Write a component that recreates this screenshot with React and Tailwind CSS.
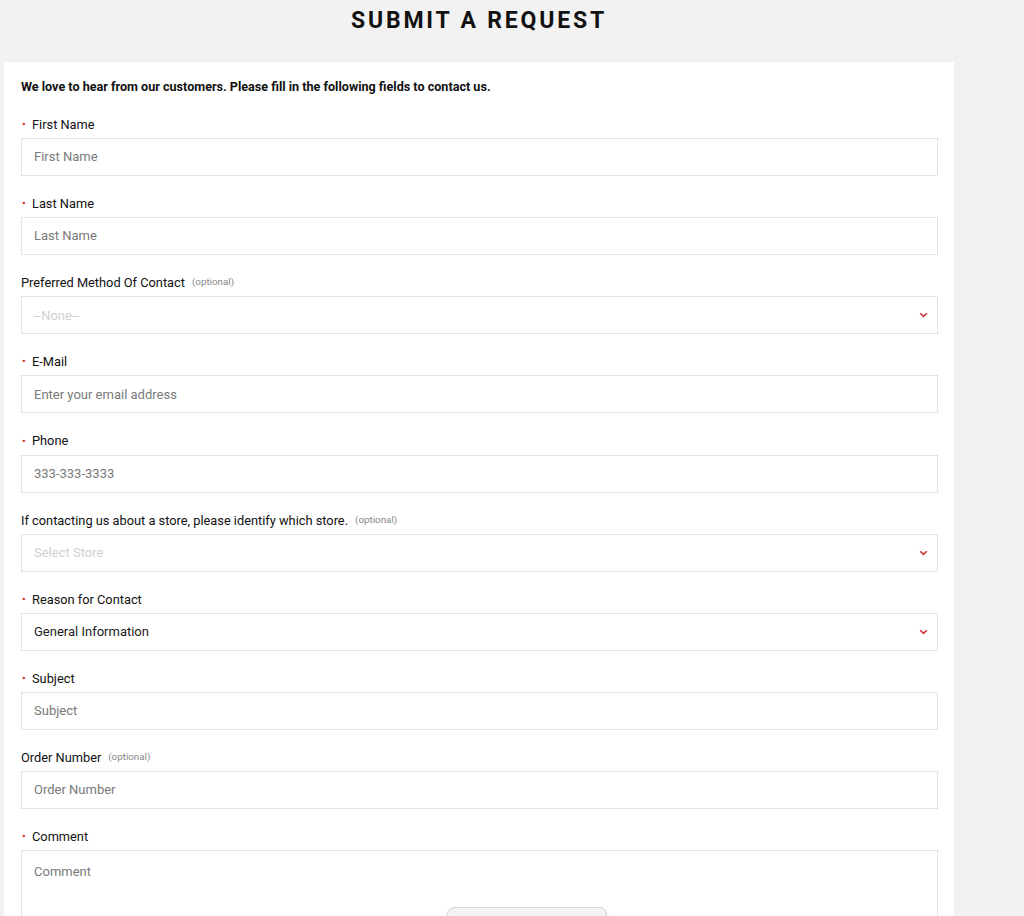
import React from "react";

const fields = [
  { label: "First Name", required: true, placeholder: "First Name" },
  { label: "Last Name", required: true, placeholder: "Last Name" },
  { label: "Preferred Method Of Contact", optional: true, select: true, placeholder: "--None--", faint: true },
  { label: "E-Mail", required: true, placeholder: "Enter your email address" },
  { label: "Phone", required: true, placeholder: "333-333-3333" },
  { label: "If contacting us about a store, please identify which store.", optional: true, select: true, placeholder: "Select Store", faint: true },
  { label: "Reason for Contact", required: true, select: true, value: "General Information" },
  { label: "Subject", required: true, placeholder: "Subject" },
  { label: "Order Number", optional: true, placeholder: "Order Number" },
];

function Chevron() {
  return (
    <svg width="9" height="6" viewBox="0 0 9 6" className="shrink-0">
      <path d="M1.2 1.2 L4.5 4.4 L7.8 1.2" fill="none" stroke="#d2343a" strokeWidth="1.6" />
    </svg>
  );
}

function Label({ f }) {
  return (
    <div className="flex items-center h-[21px] pt-[2px] mb-[4px] text-[12.8px] text-[#111]">
      {f.required && <span className="w-[11px] text-[#d2232a] text-[11px] leading-none pl-[1px]">•</span>}
      <span>{f.label}</span>
      {f.optional && <span className="ml-[7px] text-[9.8px] text-[#888]">(optional)</span>}
    </div>
  );
}

function Field({ f }) {
  return (
    <div className="mb-[16.15px]">
      <Label f={f} />
      <div className="h-[38px] border border-[#e3e3e3] flex items-center justify-between pl-[12px] pr-[9px] text-[13px]">
        {f.value ? (
          <span className="text-[#222]">{f.value}</span>
        ) : (
          <span className={f.faint ? "text-[#d0d0d0]" : "text-[#7a7a7a]"}>{f.placeholder}</span>
        )}
        {f.select && <Chevron />}
      </div>
    </div>
  );
}

export default function App() {
  return (
    <div
      className="relative bg-[#f2f2f2] h-[916px] overflow-hidden"
      style={{ fontFamily: "Roboto, 'Liberation Sans', sans-serif" }}
    >
      <div className="w-[950px] ml-[4px] pt-[6px]">
        <h1 className="text-center text-[23px] leading-[30px] font-bold tracking-[2.8px] text-[#111]">
          SUBMIT A REQUEST
        </h1>
      </div>

      <div className="w-[950px] ml-[4px] mt-[26px] bg-white pt-4 pl-[17px] pr-4 pb-10">
        <p className="text-[12.6px] leading-[18px] font-bold text-[#111] mb-[17px]">
          We love to hear from our customers. Please fill in the following fields to contact us.
        </p>

        {fields.map((f) => (
          <Field key={f.label} f={f} />
        ))}

        <div>
          <Label f={{ label: "Comment", required: true }} />
          <div className="h-[110px] border border-[#e3e3e3] pl-[12px] pt-[11px] text-[13px] text-[#7a7a7a]">
            Comment
          </div>
        </div>
      </div>

      <div className="absolute left-[447px] top-[907px] w-[160px] h-[30px] rounded-t-[8px] border border-[#d6d6d6] bg-[#f3f3f3] shadow-sm" />
    </div>
  );
}
